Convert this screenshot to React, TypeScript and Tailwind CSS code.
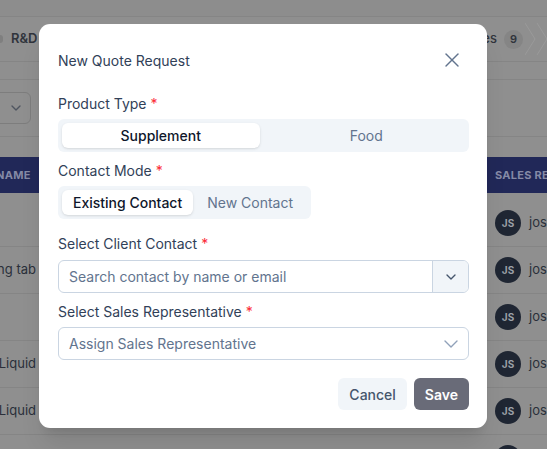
import React from 'react';
import { X, ChevronDown } from 'lucide-react';

const rows = [
  { left: '', rep: 'josiah.smith' },
  { left: 'Capsule packing tab', rep: 'josiah.smith' },
  { left: '', rep: 'josiah.smith' },
  { left: 'Herbal Liquid', rep: 'josiah.smith' },
  { left: 'Herbal Liquid', rep: 'josiah.smith' },
  { left: '', rep: 'josiah.smith' },
];

const Backdrop: React.FC = () => (
  <div className="absolute inset-0 bg-[#8f8f8f]">
    <div className="h-[17px] border-b border-[#858585] bg-[#8d8d8d]" />
    <div className="flex h-[45px] items-center justify-between border-b border-[#858585]">
      <div className="flex items-center gap-2">
        <span className="h-[8px] w-[3px] rounded-r-full bg-[#7f7f7f]" />
        <span className="text-[13px] font-semibold text-[#30343c]">R&D Check</span>
      </div>
      <div className="flex items-center">
        <span className="text-[13px] font-medium text-[#30343c]">Quotes</span>
        <span className="ml-[7px] flex h-[19px] w-[19px] items-center justify-center rounded-full bg-[#858585] text-[11px] font-semibold text-[#30343c]">9</span>
        <svg width="22" height="32" viewBox="0 0 22 32" className="ml-[2px]">
          <path d="M0 0 L10 16 L0 32" fill="none" stroke="#9a9a9a" strokeWidth="1" />
          <path d="M12 0 L22 16 L12 32" fill="none" stroke="#9a9a9a" strokeWidth="1" />
        </svg>
      </div>
    </div>
    <div className="h-[18px] border-b border-[#858585]" />
    <div className="flex h-[57px] items-center border-b border-[#858585]">
      <div className="-ml-[10px] flex h-[32px] w-[41px] items-center justify-end rounded-md border border-[#7d7d7d] pr-[6px]">
        <ChevronDown size={16} className="text-[#4f5560]" />
      </div>
    </div>
    <div className="h-[20px]" />
    <div className="flex h-[36px] items-center justify-between bg-[#212858] text-[11px] font-bold tracking-wide text-[#858aa6]">
      <span className="-ml-[4px]">NAME</span>
      <span className="w-[52px] overflow-hidden whitespace-nowrap">SALES REP</span>
    </div>
    <div className="pt-[7px]">
      {rows.map((r, i) => (
        <div key={i} className="flex h-[47px] items-center justify-between border-b border-[#858585]">
          <div className="flex w-[36px] justify-end overflow-hidden whitespace-nowrap text-[13px] text-[#2a2f3a]">
            {r.left}
          </div>
          <div className="flex w-[52px] items-center gap-2 overflow-hidden whitespace-nowrap">
            <span className="flex h-[26px] w-[26px] shrink-0 items-center justify-center rounded-full bg-[#1f2633] text-[10px] font-bold text-[#9ca0a8]">JS</span>
            <span className="text-[13px] text-[#2a2f3a]">{r.rep}</span>
          </div>
        </div>
      ))}
    </div>
  </div>
);

const Label: React.FC<{ text: string }> = ({ text }) => (
  <div className="flex h-5 items-center text-[14px] text-slate-700">
    {text}
    <span className="ml-1 text-red-500">*</span>
  </div>
);

export default function App() {
  return (
    <div className="relative h-[449px] w-[547px] overflow-hidden" style={{ fontFamily: 'Inter, "Noto Sans", sans-serif' }}>
      <Backdrop />
      <div className="absolute left-[39px] top-[24px] flex w-[448px] flex-col rounded-[11px] bg-white pb-[18px] pl-[19px] pr-[18px] pt-6 shadow-xl">
        <div className="flex h-6 items-center justify-between">
          <h2 className="text-[14px] text-slate-700">New Quote Request</h2>
          <button className="mr-[5px] text-slate-500">
            <X size={24} strokeWidth={1.4} />
          </button>
        </div>

        <div className="mt-[21px]">
          <Label text="Product Type" />
        </div>
        <div className="mt-[6px] grid h-[33px] grid-cols-2 gap-2 rounded-md bg-slate-100 p-1">
          <button className="rounded-md bg-white text-[14px] font-medium text-slate-900 shadow-sm">Supplement</button>
          <button className="rounded-md text-[14px] text-slate-500">Food</button>
        </div>

        <div className="mt-2">
          <Label text="Contact Mode" />
        </div>
        <div className="mt-[6px] flex h-[33px] w-fit rounded-md bg-slate-100 p-1">
          <button className="rounded-md bg-white px-[11px] text-[14px] font-medium text-slate-900 shadow-sm">Existing Contact</button>
          <button className="rounded-md px-[14px] text-[14px] text-slate-500">New Contact</button>
        </div>

        <div className="mt-[14px]">
          <Label text="Select Client Contact" />
        </div>
        <div className="mt-[7px] flex h-[33px] overflow-hidden rounded-md border border-slate-300">
          <input
            className="min-w-0 flex-1 px-[10px] text-[14px] text-slate-700 outline-none placeholder:text-slate-500"
            placeholder="Search contact by name or email"
          />
          <div className="flex w-9 items-center justify-center border-l border-slate-300 bg-slate-100">
            <ChevronDown size={16} className="text-slate-600" />
          </div>
        </div>

        <div className="mt-2">
          <Label text="Select Sales Representative" />
        </div>
        <div className="mt-[6px] flex h-[33px] items-center justify-between rounded-md border border-slate-300 pl-[10px] pr-[5px]">
          <span className="text-[14px] text-slate-500">Assign Sales Representative</span>
          <ChevronDown size={24} strokeWidth={1.4} className="text-slate-400" />
        </div>

        <div className="mt-[18px] flex justify-end gap-[7px]">
          <button className="h-8 rounded-md bg-slate-100 px-[11px] text-[14px] font-medium text-slate-600">Cancel</button>
          <button className="h-8 rounded-md bg-[#696b78] px-[11px] text-[14px] font-semibold text-white">Save</button>
        </div>
      </div>
    </div>
  );
}
